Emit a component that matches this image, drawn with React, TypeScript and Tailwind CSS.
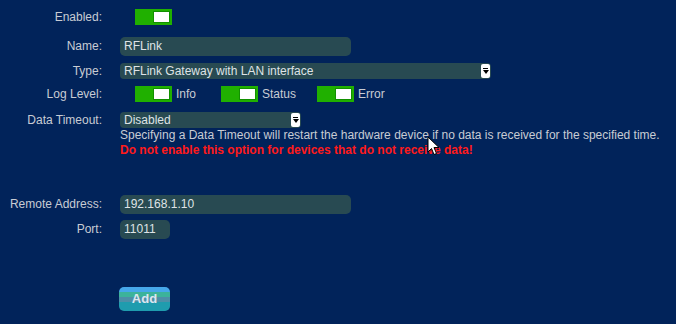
import React, { useState } from 'react';

const labelCls = 'w-[102px] shrink-0 text-right text-[12px] leading-[15px] text-[#c8ccd4]';
const fieldCls = 'bg-[#284a52] text-[#dfe3e6] text-[12px] leading-[15px] px-[4px] flex items-center';

function Toggle({ on, onClick }: { on: boolean; onClick: () => void }) {
  return (
    <button
      onClick={onClick}
      className={`w-[37px] h-[16px] flex items-center px-[2px] ${on ? 'bg-[#20b000] justify-end' : 'bg-[#777] justify-start'}`}
    >
      <span className="w-[17px] h-[12px] bg-white border border-[#129000]" />
    </button>
  );
}

function SelectBox({ value, width }: { value: string; width: string }) {
  return (
    <div className={`${fieldCls} ${width} h-[16px] rounded-[4px] justify-between pr-0`}>
      <span>{value}</span>
      <span className="w-[9px] h-[14px] bg-white rounded-[2px] flex flex-col items-center justify-center gap-[1px] mr-[1px]">
        <span className="w-[5px] h-[1px] bg-black" />
        <svg width="6" height="4" viewBox="0 0 6 4"><path d="M0 0h6L3 4z" fill="#000" /></svg>
      </span>
    </div>
  );
}

export default function App() {
  const [enabled, setEnabled] = useState(true);
  const [levels, setLevels] = useState({ Info: true, Status: true, Error: true });

  return (
    <div
      className="relative w-[676px] h-[324px] bg-[#01235a] overflow-hidden"
      style={{ fontFamily: '"Liberation Sans", Arial, sans-serif' }}
    >
      <div className="flex flex-col pt-[9px]">
        <div className="flex items-center h-[16px]">
          <div className={labelCls}>Enabled:</div>
          <div className="ml-[33px]">
            <Toggle on={enabled} onClick={() => setEnabled(!enabled)} />
          </div>
        </div>

        <div className="flex items-center mt-[12px]">
          <div className={labelCls}>Name:</div>
          <div className={`${fieldCls} h-[19px] rounded-[5px] ml-[18px] w-[231px]`}>RFLink</div>
        </div>

        <div className="flex items-center mt-[7px]">
          <div className={labelCls}>Type:</div>
          <div className="ml-[18px]">
            <SelectBox value="RFLink Gateway with LAN interface" width="w-[371px]" />
          </div>
        </div>

        <div className="flex items-center mt-[7px] h-[16px]">
          <div className={labelCls}>Log Level:</div>
          <div className="ml-[33px] flex items-center">
            {(['Info', 'Status', 'Error'] as const).map((k, i) => (
              <div key={k} className={`flex items-center ${i === 0 ? 'w-[86px]' : 'w-[96px]'}`}>
                <Toggle on={levels[k]} onClick={() => setLevels(p => ({ ...p, [k]: !p[k] }))} />
                <span className="ml-[4px] text-[12px] leading-[15px] text-[#c8ccd4]">{k}</span>
              </div>
            ))}
          </div>
        </div>

        <div className="flex items-start mt-[10px]">
          <div className={`${labelCls} leading-[16px]`}>Data Timeout:</div>
          <div className="ml-[18px] flex flex-col">
            <SelectBox value="Disabled" width="w-[181px]" />
            <div className="text-[12px] text-[#c8ccd4] leading-[15px] whitespace-nowrap">
              Specifying a Data Timeout will restart the hardware device if no data is received for the specified time.
            </div>
            <div className="text-[12px] font-bold text-[#ff1a1a] leading-[15px] whitespace-nowrap">
              Do not enable this option for devices that do not receive data!
            </div>
          </div>
        </div>

        <div className="flex items-center mt-[37px]">
          <div className={labelCls}>Remote Address:</div>
          <div className={`${fieldCls} h-[19px] rounded-[5px] ml-[18px] w-[231px]`}>192.168.1.10</div>
        </div>

        <div className="flex items-center mt-[6px]">
          <div className={labelCls}>Port:</div>
          <div className={`${fieldCls} h-[19px] rounded-[5px] ml-[18px] w-[50px]`}>11011</div>
        </div>

        <div className="mt-[47px] ml-[119px]">
          <button className="w-[51px] h-[24px] rounded-[5px] text-[13px] font-bold text-[#dce6f0] bg-[linear-gradient(to_bottom,#46a8ea_0%,#46a8ea_22%,#3cb39a_22%,#3cb39a_42%,#4d8fa8_42%,#4d8fa8_62%,#1f9cae_62%,#1f9cae_100%)]">
            Add
          </button>
        </div>
      </div>

      <svg className="absolute left-[427px] top-[136px]" width="13" height="20" viewBox="0 0 13 20">
        <path d="M1 1 L1 16 L4.5 12.5 L7 18.5 L9.5 17.5 L7 11.5 L12 11.5 Z" fill="#fff" stroke="#000" strokeWidth="1" />
      </svg>
    </div>
  );
}
